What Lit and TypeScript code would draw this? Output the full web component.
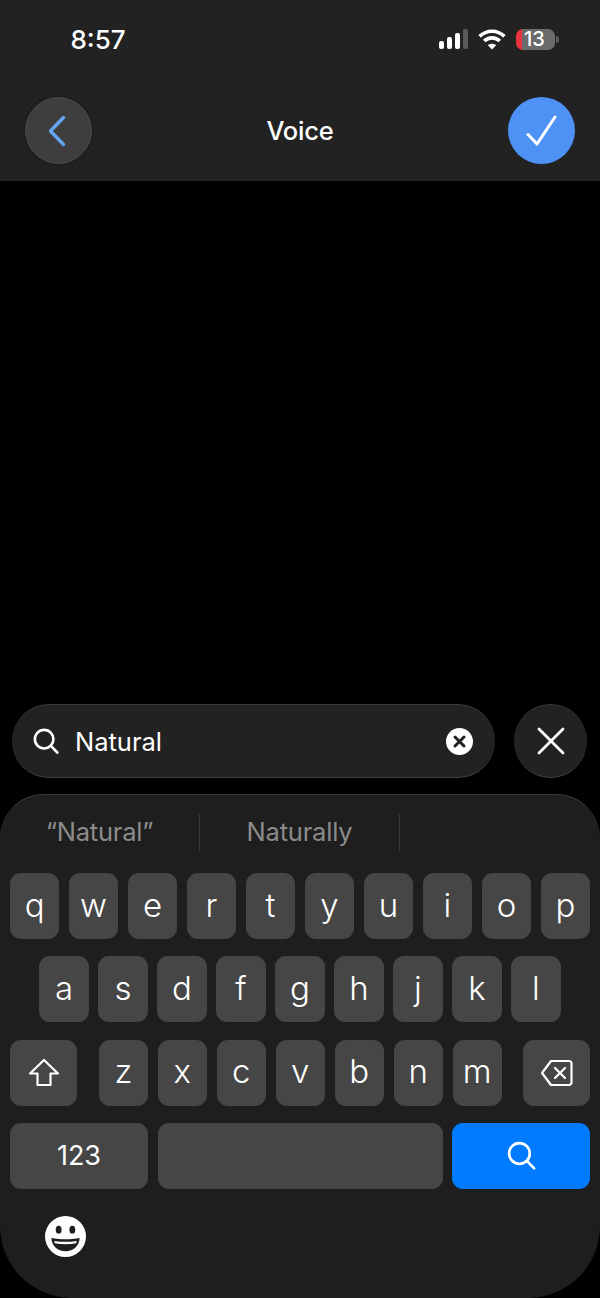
import { LitElement, html, css } from "lit";
import { customElement } from "lit/decorators.js";

const searchIcon = (size: number, sw: number) => html`<svg width=${size} height=${size} viewBox="0 0 28 28" fill="none" stroke="#fff" stroke-width=${sw} stroke-linecap="round"><circle cx="12" cy="12" r="10"/><path d="M19.200 19.200l7 7.200"/></svg>`;

const KEY_ROWS = {
  top: "qwertyuiop".split(""),
  mid: "asdfghjkl".split(""),
  low: "zxcvbnm".split(""),
};

@customElement("app-root")
export class AppRoot extends LitElement {
  static styles = css`
    :host { display: block; width: 600px; height: 1298px; background: #000; font-family: Inter, "Liberation Sans", sans-serif; color: #fff; overflow: hidden; }
    .page { display: flex; flex-direction: column; height: 1298px; }
    .top { height: 181px; background: #222; flex: none; display: flex; flex-direction: column; box-sizing: border-box; }
    .status { height: 97px; display: flex; align-items: flex-start; justify-content: space-between; box-sizing: border-box; padding: 24px 41px 0 70.500px; }
    .time { font-size: 26px; line-height: 31px; font-weight: 500; }
    .sys { display: flex; align-items: center; gap: 10px; height: 30px; }
    .batt { display: flex; align-items: center; gap: 1px; }
    .cell { width: 39px; height: 21px; box-sizing: border-box; border-radius: 7px; padding-left: 8px; background: linear-gradient(90deg, #e8323c 6px, #6a6a6a 6px); font-size: 20px; line-height: 21px; font-weight: 500; }
    .cap { width: 3px; height: 7px; border-radius: 0 3px 3px 0; background: #5a5a5a; }
    .nav { display: flex; align-items: center; justify-content: space-between; padding: 0 25px; height: 67px; }
    .title { font-size: 25.500px; font-weight: 500; letter-spacing: -0.2px; }
    .circle { width: 67px; height: 67px; border-radius: 50%; display: flex; align-items: center; justify-content: center; box-sizing: border-box; }
    .back { background: #3e3e3e; border: 1px solid #4d4d4d; box-shadow: 0 0 3px rgba(0,0,0,.6); }
    .back svg { margin-right: 4px; }
    .ok { background: #4f92f5; }
    .spacer { flex: 1; }
    .search { display: flex; align-items: center; gap: 19px; padding: 0 13px 0 12px; height: 74px; margin-bottom: 16px; }
    .pill { flex: 1; height: 74px; border-radius: 37px; background: #222; display: flex; align-items: center; padding: 0 22px 0 21px; box-sizing: border-box; border-top: 1px solid #3a3a3a; border-bottom: 1px solid #3f3f3f; }
    .query { flex: 1; font-size: 25.500px; font-weight: 400; margin-left: 16px; padding-top: 1px; }
    .close { width: 73px; height: 74px; border-radius: 50%; background: #222; border-top: 1px solid #3a3a3a; border-bottom: 1px solid #3f3f3f; display: flex; align-items: center; justify-content: center; box-sizing: border-box; }
    .kb { height: 504px; flex: none; background: #1e1e1e; border-radius: 44px 44px 72px 72px; border-top: 1px solid #3a3a3a; box-sizing: border-box; padding: 0 10px; display: flex; flex-direction: column; }
    .sug { display: flex; height: 78px; flex: none; align-items: flex-start; padding-top: 19px; box-sizing: border-box; }
    .sug div { text-align: center; font-size: 25.500px; color: #8b8b8b; letter-spacing: -0.2px; height: 37px; line-height: 35px; border-right: 1px solid #3a3a3a; box-sizing: border-box; }
    .sug .w0 { width: 190px; padding-right: 10px; }
    .sug .w1 { width: 200px; }
    .row { display: flex; justify-content: center; gap: 9.700px; height: 66px; margin-bottom: 17.330px; flex: none; }
    .row.low { justify-content: flex-start; gap: 0; }
    .row.last { margin-bottom: 0; gap: 9.500px; justify-content: flex-start; }
    .letters { display: flex; gap: 9.700px; margin: 0 21px 0 21.700px; flex: none; }
    .key { width: 49.300px; height: 66px; flex: none; background: #464646; border-radius: 11px; display: flex; align-items: center; justify-content: center; font-size: 33px; font-weight: 300; padding-bottom: 3px; box-sizing: border-box; }
    .wide { width: 67px; padding-bottom: 0; }
    .num { width: 138px; font-size: 27px; font-weight: 400; padding-bottom: 0; }
    .space { width: 285px; }
    .go { width: 138px; background: #007aff; padding-bottom: 0; }
    .emoji { margin: 27px 0 0 35px; width: 41px; height: 41px; }
  `;

  render() {
    return html`<div class="page">
      <div class="top">
        <div class="status">
          <span class="time">8:57</span>
          <div class="sys">
            <svg width="29" height="20" viewBox="0 0 29 20"><rect x="0" y="12" width="5" height="8" rx="2" fill="#fff"/><rect x="8" y="8" width="5" height="12" rx="2" fill="#fff"/><rect x="16" y="4" width="5" height="16" rx="2" fill="#fff"/><rect x="24" y="0" width="5" height="20" rx="2" fill="#5a5a5a"/></svg>
            <svg width="28" height="21" viewBox="0 0 28 21" fill="none" stroke="#fff" stroke-width="3.600"><path d="M1.600 7.400C8.600 .6 19.400 .6 26.400 7.400"/><path d="M6.200 12C10.600 7.800 17.400 7.800 21.800 12"/><path d="M14 20.600l-4.200-4.400c2.400-2 6-2 8.400 0z" fill="#fff" stroke="none"/></svg>
            <div class="batt"><div class="cell">13</div><div class="cap"></div></div>
          </div>
        </div>
        <div class="nav">
          <div class="circle back"><svg width="18" height="32" viewBox="0 0 18 32" fill="none" stroke="#64a6f3" stroke-width="3.400" stroke-linecap="round" stroke-linejoin="round"><path d="M15.500 2.500L2.500 16l13 13.500"/></svg></div>
          <div class="title">Voice</div>
          <div class="circle ok"><svg width="31" height="31" viewBox="0 0 31 31" fill="none" stroke="#fff" stroke-width="3" stroke-linecap="round" stroke-linejoin="round"><path d="M2 19.500l9 9.500L29 2"/></svg></div>
        </div>
      </div>
      <div class="spacer"></div>
      <div class="search">
        <div class="pill">
          ${searchIcon(26, 2.800)}
          <span class="query">Natural</span>
          <svg width="27" height="27" viewBox="0 0 27 27"><circle cx="13.500" cy="13.500" r="13.500" fill="#fff"/><path d="M9 9l9 9M18 9l-9 9" stroke="#222" stroke-width="3" stroke-linecap="round"/></svg>
        </div>
        <div class="close"><svg width="30" height="30" viewBox="0 0 30 30" fill="none" stroke="#fff" stroke-width="2.800" stroke-linecap="round"><path d="M3 3l24 24M27 3L3 27"/></svg></div>
      </div>
      <div class="kb">
        <div class="sug"><div class="w0">“Natural”</div><div class="w1">Naturally</div></div>
        <div class="row">${KEY_ROWS.top.map((k) => html`<div class="key">${k}</div>`)}</div>
        <div class="row">${KEY_ROWS.mid.map((k) => html`<div class="key">${k}</div>`)}</div>
        <div class="row low">
          <div class="key wide"><svg width="32" height="29" viewBox="0 0 32 29" fill="none" stroke="#fff" stroke-width="2.200" stroke-linejoin="round"><path d="M16 2L2 15.500h7.500V27h13V15.500H30z"/></svg></div>
          <div class="letters">${KEY_ROWS.low.map((k) => html`<div class="key">${k}</div>`)}</div>
          <div class="key wide"><svg width="33" height="28" viewBox="0 0 33 28" fill="none" stroke="#fff" stroke-width="2.200" stroke-linejoin="round" stroke-linecap="round"><path d="M11 2h18a2.500 2.500 0 0 1 2.500 2.500v19A2.500 2.500 0 0 1 29 26H11L2 14z"/><path d="M15 9l10 10M25 9L15 19"/></svg></div>
        </div>
        <div class="row last">
          <div class="key num">123</div>
          <div class="key space"></div>
          <div class="key go">${searchIcon(29, 2.600)}</div>
        </div>
        <div class="emoji"><svg width="41" height="41" viewBox="0 0 42 42"><circle cx="21" cy="21" r="21" fill="#fff"/><ellipse cx="14" cy="14" rx="3" ry="4" fill="#1e1e1e"/><ellipse cx="28" cy="14" rx="3" ry="4" fill="#1e1e1e"/><path d="M6.500 22.500c9 1.800 20 1.800 29 0C35 31 29 36 21 36S7 31 6.500 22.500z" fill="#1e1e1e"/><path d="M9.500 25.500c7.500 1.300 15.500 1.300 23 0l-.5 2.500c-7 1.200-15 1.200-22 0z" fill="#fff"/></svg></div>
      </div>
    </div>`;
  }
}
